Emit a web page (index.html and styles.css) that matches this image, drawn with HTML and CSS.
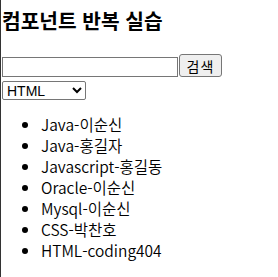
FILE: index.html
```html
<!DOCTYPE html>
<html lang="ko">
<head>
  <meta charset="utf-8" />
  <title>컴포넌트 반복 실습</title>
  <link rel="stylesheet" href="styles.css">
</head>
<body>
  <div class="app">
    <h3 class="title">컴포넌트 반복 실습</h3>

    <form class="search">
      <input class="search-input" type="text">
      <button class="search-btn" type="button">검색</button>
    </form>

    <select class="lang">
      <option>HTML</option>
      <option>CSS</option>
      <option>Java</option>
      <option>Javascript</option>
      <option>Oracle</option>
      <option>Mysql</option>
    </select>

    <ul class="list">
      <li>Java-이순신</li>
      <li>Java-홍길자</li>
      <li>Javascript-홍길동</li>
      <li>Oracle-이순신</li>
      <li>Mysql-이순신</li>
      <li>CSS-박찬호</li>
      <li>HTML-coding404</li>
    </ul>
  </div>
</body>
</html>
```

FILE: styles.css
```css
body {
  margin: 0;
  font-family: "Noto Sans CJK KR", "Noto Sans", sans-serif;
  color: #000;
  background: #fff;
}

.app {
  border-left: 1px solid #333;
  padding-left: 1px;
  min-height: 277px;
  box-sizing: border-box;
}

.title {
  margin: 0;
  padding-top: 7px;
  font-size: 20.3px;
  font-weight: bold;
  line-height: 26px;
}

.search {
  display: flex;
  align-items: flex-end;
  margin-top: 21px;
}

.search-input {
  width: 176px;
  height: 20px;
  box-sizing: border-box;
  margin: 0;
  border: 1px solid #767676;
  padding: 1px 2px;
}

.search-btn {
  margin: 0 0 0 1px;
  width: 43px;
  height: 23px;
  box-sizing: border-box;
  padding: 0;
  font-family: "Noto Sans CJK KR", sans-serif;
  font-size: 14px;
  letter-spacing: 1px;
  color: #000;
  background: #efefef;
  border: 1px solid #767676;
  border-radius: 3px;
}

.lang {
  display: block;
  margin-top: 4px;
  width: 84px;
  height: 19px;
  font-family: "Liberation Sans", Arial, sans-serif;
  font-size: 14px;
  border: 1px solid #767676;
  border-radius: 2px;
  background: #fff;
  color: #000;
}

.list {
  margin: 14px 0 0;
  padding-left: 39px;
  font-size: 15.5px;
  font-weight: 350;
  line-height: 21px;
}
```
